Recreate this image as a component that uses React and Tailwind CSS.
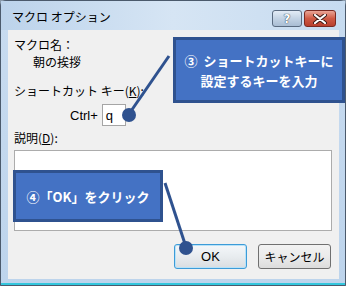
export default function App() {
  const jp = { fontFamily: '"Noto Sans CJK JP", "Noto Sans", sans-serif' };
  return (
    <div className="relative w-[346px] h-[286px] overflow-hidden bg-[#8a9aab]" style={jp}>
      <div className="absolute inset-0 border border-[#4b5a6c] rounded-t-[6px] bg-gradient-to-b from-[#c9dcf0] to-[#bdd4ec] flex flex-col">
        {/* title bar */}
        <div className="h-[29px] shrink-0 flex items-center pl-[11px] pr-[9px] bg-gradient-to-r from-[#bcd3eb] via-[#d6e5f4] to-[#c6dbf0]">
          <span className="text-[12px] text-black leading-none mt-[2px]">マクロ オプション</span>
          <div className="ml-auto flex gap-[2px] mt-[6px]">
            <div className="w-[30px] h-[17px] rounded-[3px] border border-[#5a6b80] bg-gradient-to-b from-[#e3ecf6] via-[#c3d3e4] to-[#a9bdd3] flex items-center justify-center">
              <span className="text-[12px] font-bold text-white leading-none" style={{ fontFamily: '"DejaVu Sans", sans-serif', textShadow: '0 0 1px #2b3a4c, 0 0 1px #2b3a4c' }}>?</span>
            </div>
            <div className="w-[32px] h-[17px] rounded-[3px] border border-[#7a2a22] bg-gradient-to-b from-[#e9a597] via-[#cf5a45] to-[#b8402e] flex items-center justify-center">
              <svg width="14" height="10" viewBox="0 0 14 10">
                <path d="M2 1 L12 9 M12 1 L2 9" stroke="#3a1a16" strokeWidth="4" strokeLinecap="round" />
                <path d="M2 1 L12 9 M12 1 L2 9" stroke="#ffffff" strokeWidth="2.2" strokeLinecap="round" />
              </svg>
            </div>
          </div>
        </div>
        {/* client area */}
        <div className="ml-[7px] mr-[6px] h-[249px] shrink-0 bg-[#f0f0f0] text-[12px] text-black flex flex-col pl-[6px] pr-[7px]">
          <div className="mt-[9px] h-[12px] leading-none">マクロ名：</div>
          <div className="mt-[5px] h-[12px] leading-none pl-[19px]">朝の挨拶</div>
          <div className="mt-[17px] h-[12px] leading-none">ショートカット キー(<span className="underline">K</span>):</div>
          <div className="h-[22px] mt-[7px] flex items-center pl-[56px]">
            <span className="leading-none" style={{ fontFamily: '"Liberation Sans", sans-serif', fontSize: '13px' }}>Ctrl+</span>
            <div className="ml-[4px] w-[24px] h-[22px] border border-[#a5a5a5] bg-white flex items-center pl-[3px]">
              <span className="leading-none" style={{ fontFamily: '"Liberation Sans", sans-serif', fontSize: '13px' }}>q</span>
            </div>
          </div>
          <div className="mt-[6px] h-[12px] leading-none">説明(<span className="underline">D</span>):</div>
          <div className="mt-[6px] h-[81px] border border-[#acacac] bg-white" />
          <div className="mt-[13px] flex justify-end gap-[11px] pr-[1px]">
            <div className="w-[73px] h-[25px] rounded-[3px] border border-[#3c9bd8] bg-gradient-to-b from-[#f4f7fa] via-[#e8ecef] to-[#d9dde1] flex items-center justify-center shadow-[inset_0_0_0_1px_#b8e2f8]">
              <span className="leading-none" style={{ fontFamily: '"Liberation Sans", sans-serif', fontSize: '13px' }}>OK</span>
            </div>
            <div className="w-[73px] h-[25px] rounded-[3px] border border-[#707070] bg-gradient-to-b from-[#f2f2f2] via-[#ebebeb] to-[#dcdcdc] flex items-center justify-center">
              <span className="leading-none text-[12px]">キャンセル</span>
            </div>
          </div>
        </div>
        <div className="flex-1 border-b-2 border-[#33c6dd]" />
      </div>

      {/* callout 1 */}
      <div className="absolute left-[173px] top-[37px] w-[172px] h-[66px] bg-[#4472c4] border-[3px] border-[#2f528f] flex flex-col items-center justify-center gap-[7px] text-white font-bold text-[13px] leading-none">
        <span>③&nbsp;&nbsp;ショートカットキーに</span>
        <span>設定するキーを入力</span>
      </div>
      {/* callout 2 */}
      <div className="absolute left-[13px] top-[170px] w-[150px] h-[52px] bg-[#4472c4] border-[3px] border-[#2f528f] flex items-center justify-center text-white font-bold text-[13px] leading-none">
        <span>④「OK」をクリック</span>
      </div>

      {/* pointer lines */}
      <svg className="absolute left-0 top-0 pointer-events-none" width="346" height="286">
        <line x1="169" y1="56" x2="129" y2="114" stroke="#2f528f" strokeWidth="3" />
        <circle cx="129" cy="115" r="7" fill="#2f528f" />
        <line x1="165" y1="183" x2="186" y2="247" stroke="#2f528f" strokeWidth="3" />
        <circle cx="186" cy="248" r="7" fill="#2f528f" />
      </svg>
    </div>
  );
}
